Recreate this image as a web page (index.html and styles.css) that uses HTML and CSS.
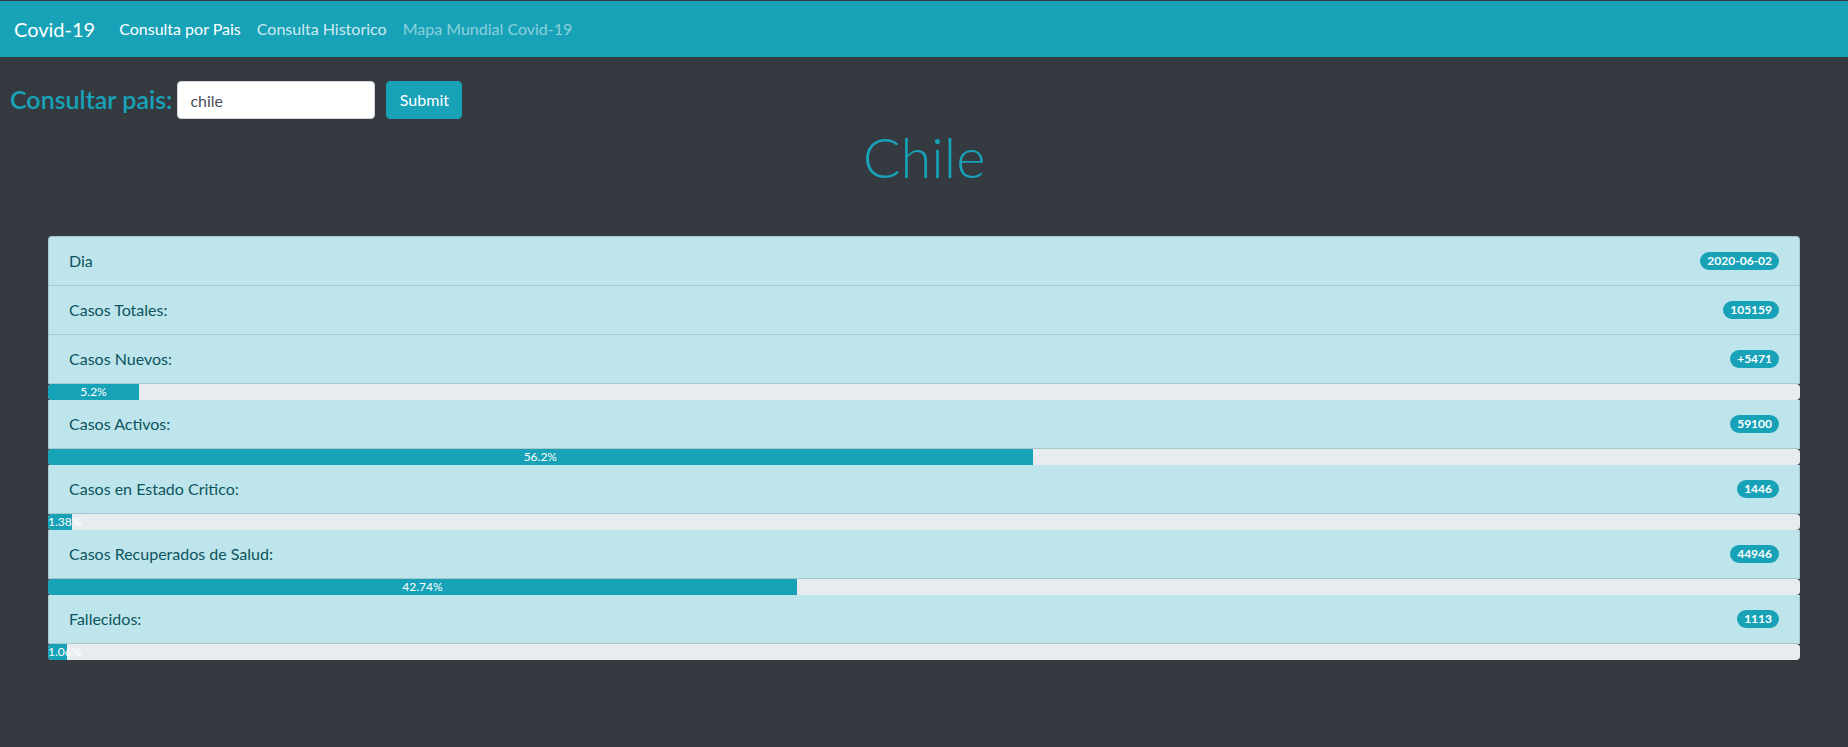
FILE: index.html
```html
<!DOCTYPE html>
<html lang="es">
<head>
<meta charset="utf-8">
<title>Covid-19</title>
<link rel="stylesheet" href="styles.css">
</head>
<body>
<nav class="navbar">
  <a class="brand" href="#">Covid-19</a>
  <ul class="nav-links">
    <li><a class="nav-link active" href="#">Consulta por Pais</a></li>
    <li><a class="nav-link hover" href="#">Consulta Historico</a></li>
    <li><a class="nav-link" href="#">Mapa Mundial Covid-19</a></li>
  </ul>
</nav>
<form class="search">
  <label class="search-label" for="pais">Consultar pais:</label>
  <input class="search-input" id="pais" type="text" value="chile">
  <button class="btn" type="button">Submit</button>
</form>
<h1 class="country">Chile</h1>
<div class="stats">
  <div class="stat-item"><span>Dia</span><span class="badge">2020-06-02</span></div>
  <div class="stat-item"><span>Casos Totales:</span><span class="badge">105159</span></div>
  <div class="stat-item"><span>Casos Nuevos:</span><span class="badge">+5471</span></div>
  <div class="progress"><div class="progress-bar" style="width:5.2%">5.2%</div></div>
  <div class="stat-item"><span>Casos Activos:</span><span class="badge">59100</span></div>
  <div class="progress"><div class="progress-bar" style="width:56.2%">56.2%</div></div>
  <div class="stat-item"><span>Casos en Estado Critico:</span><span class="badge">1446</span></div>
  <div class="progress"><div class="progress-bar" style="width:1.38%">1.38%</div></div>
  <div class="stat-item"><span>Casos Recuperados de Salud:</span><span class="badge">44946</span></div>
  <div class="progress"><div class="progress-bar" style="width:42.74%">42.74%</div></div>
  <div class="stat-item"><span>Fallecidos:</span><span class="badge">1113</span></div>
  <div class="progress"><div class="progress-bar" style="width:1.06%">1.06%</div></div>
</div>
</body>
</html>
```
FILE: styles.css
```css
* { box-sizing: border-box; }

html, body {
  margin: 0;
  padding: 0;
}

body {
  background: #343a40;
  font-family: Lato, "Noto Sans", sans-serif;
  font-size: 16px;
  line-height: 1.5;
  color: #212529;
  padding-top: 1px;
  min-height: 747px;
}

.navbar {
  display: flex;
  align-items: center;
  height: 56px;
  padding: 0 14px;
  background: #17a2b8;
}

.brand {
  font-size: 20px;
  color: #fff;
  text-decoration: none;
  margin-right: 16px;
}

.nav-links {
  display: flex;
  list-style: none;
  margin: 0;
  padding: 0;
}

.nav-link {
  display: block;
  padding: 8px 8px;
  color: rgba(255, 255, 255, 0.5);
  text-decoration: none;
}

.nav-link.hover { color: rgba(255, 255, 255, 0.8); }
.nav-link.active { color: #fff; }

.search {
  display: flex;
  align-items: center;
  margin: 24px 0 0;
  padding-left: 10px;
}

.search-label {
  font-size: 25px;
  font-weight: 600;
  color: #17a2b8;
  margin-right: 5px;
}

.search-input {
  width: 198px;
  height: 38px;
  padding: 6px 12px;
  font: inherit;
  color: #495057;
  background: #fff;
  border: 1px solid #ced4da;
  border-radius: 4px;
}

.btn {
  margin-left: 11px;
  width: 76px;
  height: 38px;
  padding: 6px 12px;
  font: inherit;
  color: #fff;
  background: #17a2b8;
  border: 1px solid #17a2b8;
  border-radius: 4px;
}

.country {
  margin: 4px 0 0;
  text-align: center;
  font-size: 56px;
  font-weight: 300;
  line-height: 1.2;
  color: #17a2b8;
}

.stats {
  margin: 46px 48px 0;
}

.stat-item {
  display: flex;
  justify-content: space-between;
  align-items: center;
  padding: 12px 20px;
  background: #bee5eb;
  color: #0c5460;
  border: 1px solid rgba(0, 0, 0, 0.125);
  border-top-width: 0;
}

.stat-item:first-child {
  border-top-width: 1px;
  border-radius: 4px 4px 0 0;
}

.badge {
  display: inline-block;
  padding: 3px 7px;
  font-size: 12px;
  font-weight: 700;
  line-height: 1;
  color: #fff;
  background: #17a2b8;
  border-radius: 10rem;
}

.progress {
  display: flex;
  height: 16px;
  font-size: 12px;
  line-height: 1;
  background: #e9ecef;
  border-radius: 4px;
  overflow: hidden;
}

.progress-bar {
  display: flex;
  flex-direction: column;
  justify-content: center;
  color: #fff;
  text-align: center;
  white-space: nowrap;
  background: #17a2b8;
}
```
